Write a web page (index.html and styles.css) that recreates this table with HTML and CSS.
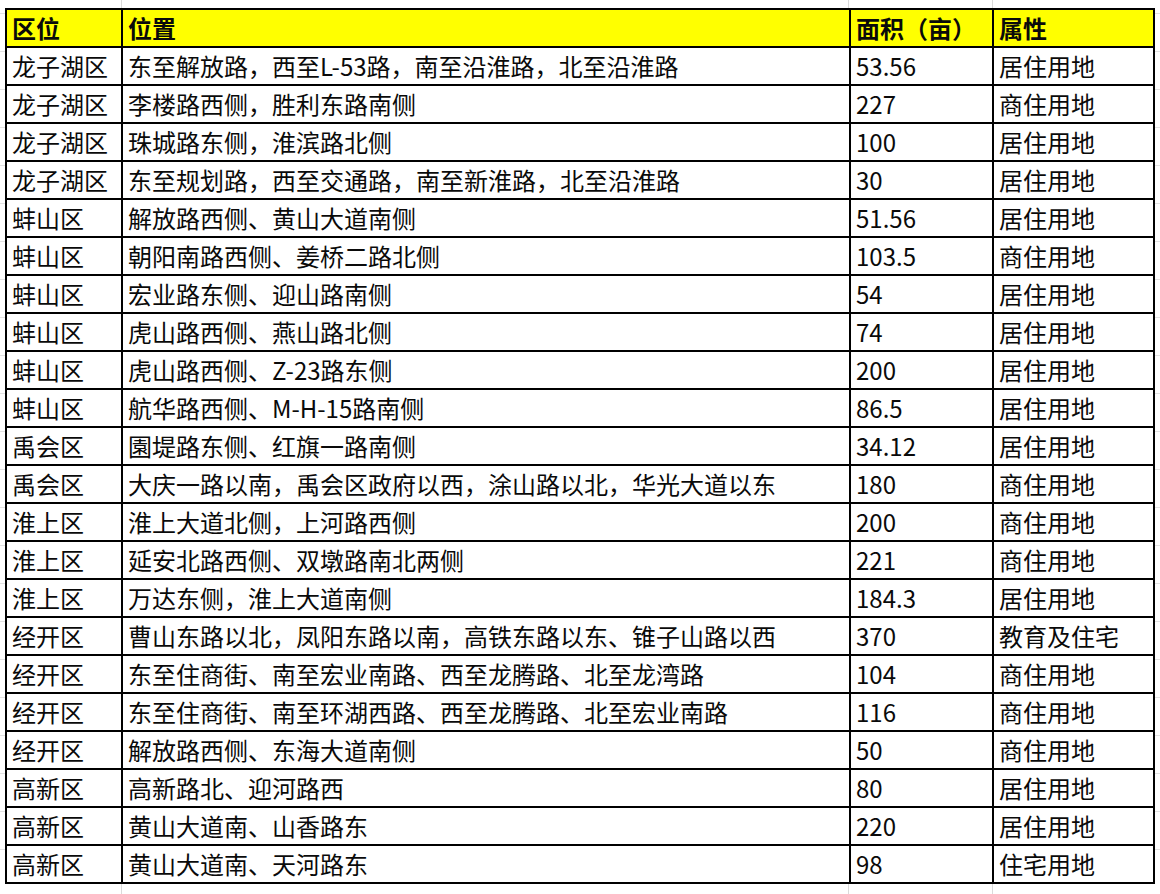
FILE: index.html
```html
<!DOCTYPE html>
<html lang="zh-CN">
<head>
<meta charset="utf-8">
<title>地块表</title>
<link rel="stylesheet" href="styles.css">
</head>
<body>
<table class="sheet">
<colgroup>
<col class="c-area"><col class="c-loc"><col class="c-size"><col class="c-type">
</colgroup>
<thead>
<tr class="head"><th>区位</th><th>位置</th><th>面积（亩）</th><th>属性</th></tr>
</thead>
<tbody>
<tr><td>龙子湖区</td><td>东至解放路，西至L-53路，南至沿淮路，北至沿淮路</td><td>53.56</td><td>居住用地</td></tr>
<tr><td>龙子湖区</td><td>李楼路西侧，胜利东路南侧</td><td>227</td><td>商住用地</td></tr>
<tr><td>龙子湖区</td><td>珠城路东侧，淮滨路北侧</td><td>100</td><td>居住用地</td></tr>
<tr><td>龙子湖区</td><td>东至规划路，西至交通路，南至新淮路，北至沿淮路</td><td>30</td><td>居住用地</td></tr>
<tr><td>蚌山区</td><td>解放路西侧、黄山大道南侧</td><td>51.56</td><td>居住用地</td></tr>
<tr><td>蚌山区</td><td>朝阳南路西侧、姜桥二路北侧</td><td>103.5</td><td>商住用地</td></tr>
<tr><td>蚌山区</td><td>宏业路东侧、迎山路南侧</td><td>54</td><td>居住用地</td></tr>
<tr><td>蚌山区</td><td>虎山路西侧、燕山路北侧</td><td>74</td><td>居住用地</td></tr>
<tr><td>蚌山区</td><td>虎山路西侧、Z-23路东侧</td><td>200</td><td>居住用地</td></tr>
<tr><td>蚌山区</td><td>航华路西侧、M-H-15路南侧</td><td>86.5</td><td>居住用地</td></tr>
<tr><td>禹会区</td><td>園堤路东侧、红旗一路南侧</td><td>34.12</td><td>居住用地</td></tr>
<tr><td>禹会区</td><td>大庆一路以南，禹会区政府以西，涂山路以北，华光大道以东</td><td>180</td><td>商住用地</td></tr>
<tr><td>淮上区</td><td>淮上大道北侧，上河路西侧</td><td>200</td><td>商住用地</td></tr>
<tr><td>淮上区</td><td>延安北路西侧、双墩路南北两侧</td><td>221</td><td>商住用地</td></tr>
<tr><td>淮上区</td><td>万达东侧，淮上大道南侧</td><td>184.3</td><td>居住用地</td></tr>
<tr><td>经开区</td><td>曹山东路以北，凤阳东路以南，高铁东路以东、锥子山路以西</td><td>370</td><td>教育及住宅</td></tr>
<tr><td>经开区</td><td>东至住商街、南至宏业南路、西至龙腾路、北至龙湾路</td><td>104</td><td>商住用地</td></tr>
<tr><td>经开区</td><td>东至住商街、南至环湖西路、西至龙腾路、北至宏业南路</td><td>116</td><td>商住用地</td></tr>
<tr><td>经开区</td><td>解放路西侧、东海大道南侧</td><td>50</td><td>商住用地</td></tr>
<tr><td>高新区</td><td>高新路北、迎河路西</td><td>80</td><td>居住用地</td></tr>
<tr><td>高新区</td><td>黄山大道南、山香路东</td><td>220</td><td>居住用地</td></tr>
<tr><td>高新区</td><td>黄山大道南、天河路东</td><td>98</td><td>住宅用地</td></tr>
</tbody>
</table>
</body>
</html>
```

FILE: styles.css
```css
html {
  background-color: #ffffff;
  background-image:
    linear-gradient(to right, transparent 121px, #dadada 121px, #dadada 122px, transparent 122px),
    linear-gradient(to right, transparent 848px, #dadada 848px, #dadada 849px, transparent 849px),
    linear-gradient(to right, transparent 992px, #dadada 992px, #dadada 993px, transparent 993px),
    repeating-linear-gradient(to bottom, transparent 0, transparent 13px, #e2e2e2 13px, #e2e2e2 14px, transparent 14px, transparent 38px);
}

body {
  margin: 0;
  padding: 8px 0 0 5px;
  font-family: "Noto Sans CJK SC", "Noto Sans", sans-serif;
  color: #0a0a0a;
}

.sheet {
  border-collapse: collapse;
  table-layout: fixed;
  width: 1148px;
  background: #ffffff;
}

.c-area { width: 116px; }
.c-loc { width: 728px; }
.c-size { width: 143px; }
.c-type { width: 161px; }

.sheet th,
.sheet td {
  border: 2px solid #000000;
  height: 36px;
  padding: 0 0 0 5px;
  font-size: 24px;
  line-height: 36px;
  text-align: left;
  white-space: nowrap;
  overflow: hidden;
}

.sheet td {
  font-weight: 400;
}

.head th {
  background: #ffff00;
  font-weight: 700;
}
```
